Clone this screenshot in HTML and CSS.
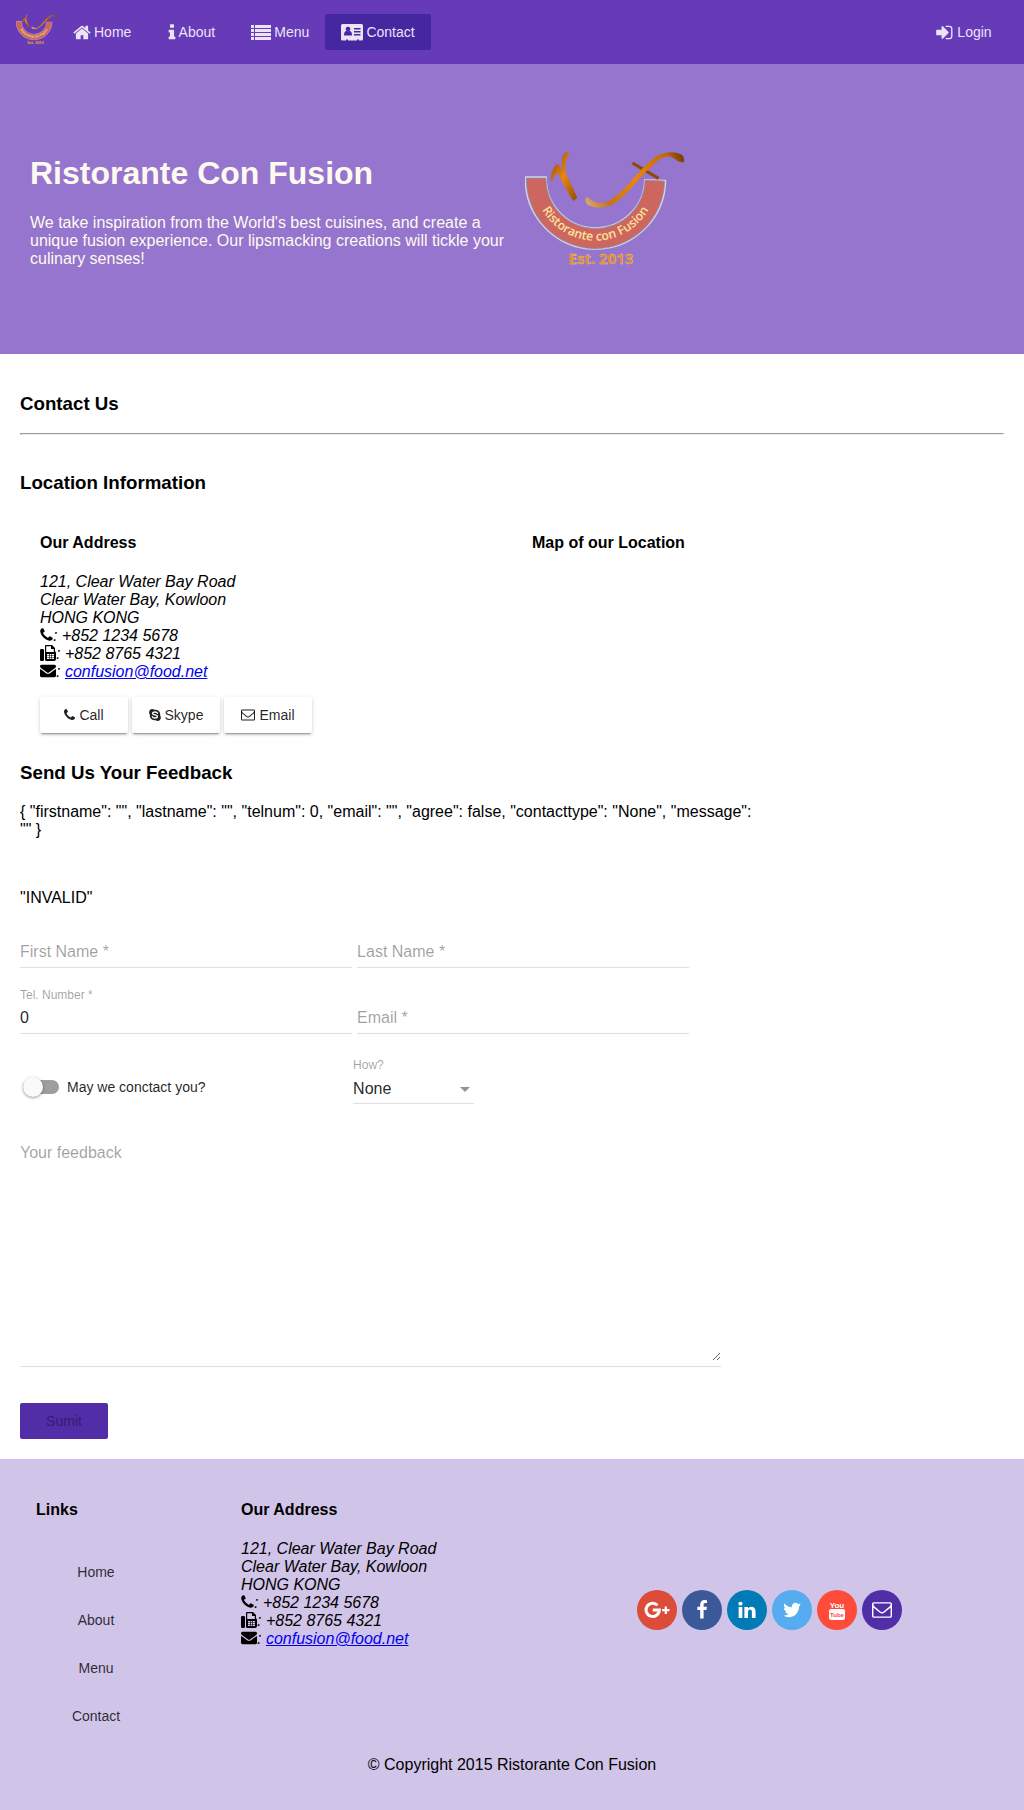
FILE: index.html
```html
<!DOCTYPE html>
<html lang="en">
<head>
<meta charset="utf-8">
<meta name="viewport" content="width=device-width, initial-scale=1">
<title>Ristorante Con Fusion</title>
<link rel="stylesheet" href="styles.css">
</head>
<body>
<svg class="sprite" width="0" height="0" aria-hidden="true">
  <symbol id="i-home" viewBox="64 0 1664 1792"><path d="M1472 992v480q0 26-19 45t-45 19h-384v-384h-256v384h-384q-26 0-45-19t-19-45v-480q0-1 .5-3t.5-3l575-474 575 474q1 2 1 6zm223-69l-62 74q-8 9-21 11h-3q-13 0-21-7l-692-577-692 577q-12 8-24 7-13-2-21-11l-62-74q-8-10-7-23.500t11-21.500l719-599q32-26 76-26t76 26l244 204v-195q0-14 9-23t23-9h192q14 0 23 9t9 23v408l219 182q10 8 11 21.500t-7 23.500z"/></symbol>
  <symbol id="i-info" viewBox="544 0 700 1792"><path d="M1216 1344v128q0 26-19 45t-45 19h-512q-26 0-45-19t-19-45v-128q0-26 19-45t45-19h64v-384h-64q-26 0-45-19t-19-45v-128q0-26 19-45t45-19h384q26 0 45 19t19 45v576h64q26 0 45 19t19 45zm-128-1152v192q0 26-19 45t-45 19h-256q-26 0-45-19t-19-45v-192q0-26 19-45t45-19h256q26 0 45 19t19 45z"/></symbol>
  <symbol id="i-list" viewBox="0 0 20 18"><path d="M0 2h3v3H0zM4 2h16v3H4zM0 6h3v3H0zM4 6h16v3H4zM0 10h3v3H0zM4 10h16v3H4zM0 14h3v3H0zM4 14h16v3H4z"/></symbol>
  <symbol id="i-card" viewBox="0 0 22 18"><path fill-rule="evenodd" d="M2 1h18.500Q22 1 22 2.500v13.500Q22 17.500 20.500 17.500H18v-1h-2v1H7v-1H5v1H1.500Q0 17.500 0 16V2.500Q0 1 1.500 1zM3 12.500h8q0-4-2-4.500h-4q-2 .5-2 4.500zM7 3.700a2.300 2.300 0 1 0 .01 0zM13 5v1.500h6.500V5zM13 8v1.500h6.500V8zM13 11v1.500h6.500V11z"/></symbol>
  <symbol id="i-login" viewBox="128 0 1664 1792"><path d="M1312 896q0 26-19 45l-544 544q-19 19-45 19t-45-19-19-45v-288h-448q-26 0-45-19t-19-45v-384q0-26 19-45t45-19h448v-288q0-26 19-45t45-19 45 19l544 544q19 19 19 45zm352-352v704q0 119-84.500 203.500t-203.500 84.500h-320q-13 0-22.500-9.500t-9.500-22.500q0-4-1-20t-.5-26.500 3-23.500 10-19.500 20.500-6.500h320q66 0 113-47t47-113v-704q0-66-47-113t-113-47h-312l-11.500-1-11.500-3-8-5.500-7-9-2-13.500q0-4-1-20t-.5-26.500 3-23.500 10-19.500 20.500-6.500h320q119 0 203.500 84.500t84.500 203.500z"/></symbol>
  <symbol id="i-phone" viewBox="192 0 1408 1792"><path d="M1600 1240q0 27-10 70.500t-21 68.500q-21 50-122 106-94 51-186 51-27 0-53-3.500t-57.500-12.500-47-14.500-55.500-20.500-49-18q-98-35-175-83-127-79-264-216t-216-264q-48-77-83-175-3-9-18-49t-20.500-55.500-14.500-47-12.500-57.500-3.500-53q0-92 51-186 56-101 106-122 25-11 68.500-21t70.500-10q14 0 21 3 18 6 53 76 11 19 30 54t35 63.500 31 53.500q3 4 17.500 25t21.500 35.500 7 28.500q0 20-28.500 50t-62 55-62 53-28.500 46q0 9 5 22.500t8.500 20.500 14 24 11.500 19q76 137 174 235t235 174q2 1 19 11.500t24 14 20.500 8.500 22.500 5q18 0 46-28.500t53-62 55-62 50-28.500q14 0 28.500 7t35.500 21.500 25 17.500q25 15 53.500 31t63.500 35 54 30q70 35 76 53 3 7 3 21z"/></symbol>
  <symbol id="i-fax" viewBox="0 0 16 16"><path fill-rule="evenodd" d="M1.200 4H2.800Q4 4 4 5.200V14.800Q4 16 2.800 16H1.200Q0 16 0 14.800V5.200Q0 4 1.200 4zM6 0H12L15 3V6.300Q16 6.800 16 8V14Q16 16 14 16H6.500Q5 16 5 14.500V1Q5 0 6 0zM6.200 1.200V7H13.800V4H11V1.200zM7 9V14H14V9z"/><path d="M7 10.400h7v.6H7zM7 12.200h7v.6H7zM9 9h.6v5H9zM11.300 9h.6v5h-.6z"/></symbol>
  <symbol id="i-mail" viewBox="0 64 1792 1792"><path d="M1792 710v794q0 66-47 113t-113 47h-1472q-66 0-113-47t-47-113v-794q44 49 101 87 362 246 497 345 57 42 92.500 65.500t94.500 48 110 24.500h2q51 0 110-24.500t94.500-48 92.500-65.500q170-123 498-345 57-39 100-87zm0-294q0 79-49 151t-122 123q-376 261-468 325-10 7-42.500 30.500t-54 38-52 32.500-57.500 27-50 9h-2q-23 0-50-9t-57.500-27-52-32.500-54-38-42.500-30.500q-91-64-262-182.500t-205-142.500q-62-42-117-115.500t-55-136.500q0-78 41.500-130t118.500-52h1472q65 0 112.500 47t47.500 113z"/></symbol>
  <symbol id="i-mail-o" viewBox="0 64 1792 1792"><path d="M1664 1504v-768q-32 36-69 66-268 206-426 338-51 43-83 67t-86.500 48.500-102.500 24.500h-2q-48 0-102.500-24.500t-86.500-48.500-83-67q-158-132-426-338-37-30-69-66v768q0 13 9.500 22.500t22.500 9.500h1472q13 0 22.500-9.500t9.500-22.500zm0-1051v-24.500l-.5-13-3-12.500-5.500-9-9-7.500-14-2.500h-1472q-13 0-22.500 9.500t-9.500 22.500q0 168 147 284 193 152 401 317 6 5 35 29.500t46 37.500 44.500 31.500 50.500 27.500 43 9h2q20 0 43-9t50.500-27.500 44.500-31.500 46-37.500 35-29.500q208-165 401-317 54-43 100.500-115.500t46.500-131.500zm128-37v1088q0 66-47 113t-113 47h-1472q-66 0-113-47t-47-113v-1088q0-66 47-113t113-47h1472q66 0 113 47t47 113z"/></symbol>
  <symbol id="i-skype" viewBox="0 0 12 14"><path d="M3.300 1Q4.600 1 5.300 1.700Q8 1.300 9.800 3.100T11.200 7.500Q12 8.700 11.800 10Q11.300 13 8.700 13Q7.500 13 6.700 12.300Q4 12.700 2.200 10.900T.8 6.500Q0 5.500 .1 4.300Q.5 1 3.300 1z"/><path d="M8.500 5.300Q8.200 4 6 4Q3.600 4 3.600 5.400Q3.600 6.600 6 6.900T8.500 8.600Q8.500 10 6 10Q3.700 10 3.400 8.600" fill="none" stroke="#fff" stroke-width="1.300" stroke-linecap="round"/></symbol>
  <symbol id="i-gplus" viewBox="0 0 26 18"><path d="M13.500 4.300A6.600 6.600 0 1 0 15.300 9.100H8.800" fill="none" stroke="currentColor" stroke-width="3"/><path d="M20.700 5.500h2.200V8h2.600v2.300h-2.600v2.600h-2.200v-2.600h-2.600V8h2.600z"/></symbol>
  <symbol id="i-facebook" viewBox="0 0 1792 1792"><path d="M1343 12v264h-157q-86 0-116 36t-30 108v189h293l-39 296h-254v759h-306v-759h-255v-296h255v-218q0-186 104-288.500t277-102.500q147 0 228 12z"/></symbol>
  <symbol id="i-linkedin" viewBox="0 0 1792 1792"><path d="M477 625v991h-330v-991h330zm21-306q1 73-50.500 122t-135.500 49h-2q-82 0-132-49t-50-122q0-74 51.500-122.500t134.500-48.500 133 48.500 51 122.500zm1166 729v568h-329v-530q0-105-40.500-164.500t-126.500-59.500q-63 0-105.500 34.500t-63.500 85.500q-11 30-11 81v553h-329q2-399 2-647t-1-296l-1-48h329v144h-2q20-32 41-56t56.500-52 87-43.500 114.500-15.500q171 0 275 113.500t104 332.500z"/></symbol>
  <symbol id="i-twitter" viewBox="0 0 1792 1792"><path d="M1684 408q-67 98-162 167 1 14 1 42 0 130-38 259.500t-115.500 248.500-184.500 210.500-258 146-323 54.500q-271 0-496-145 35 4 78 4 225 0 401-138-105-2-188-64.500t-114-159.500q33 5 61 5 43 0 85-11-112-23-185.500-111.500t-73.500-205.500v-4q68 38 146 41-66-44-105-115t-39-154q0-88 44-163 121 149 294.500 238.500t371.500 99.500q-8-38-8-74 0-134 94.500-228.500t228.500-94.500q140 0 236 102 109-21 205-78-37 115-142 178 93-10 186-50z"/></symbol>
</svg>

<header class="toolbar">
  <a class="brand" href="#" aria-label="Ristorante Con Fusion"><svg class="brand-logo" viewBox="45 30 480 366"><use href="#logo-art"/></svg></a>
  <nav class="nav">
    <a class="btn" href="#"><svg width="18" height="19"><use href="#i-home"/></svg>Home</a>
    <a class="btn" href="#"><svg width="8" height="19"><use href="#i-info"/></svg>About</a>
    <a class="btn" href="#"><svg width="20" height="18"><use href="#i-list"/></svg>Menu</a>
    <a class="btn btn-active" href="#" aria-current="page"><svg width="22" height="18"><use href="#i-card"/></svg>Contact</a>
  </nav>
  <a class="btn" href="#"><svg width="18" height="19"><use href="#i-login"/></svg>Login</a>
</header>

<section class="hero">
  <div class="hero-text">
    <h1>Ristorante Con Fusion</h1>
    <p>We take inspiration from the World's best cuisines, and create a unique fusion experience. Our lipsmacking creations will tickle your culinary senses!</p>
  </div>
  <svg class="hero-logo" viewBox="45 30 480 366" role="img" aria-label="Ristorante con Fusion">
    <defs>
      <linearGradient id="pepper" x1="0" y1="0" x2="1" y2="1">
        <stop offset="0" stop-color="#8a4a08"/><stop offset=".5" stop-color="#e8860f"/><stop offset="1" stop-color="#8f4c06"/>
      </linearGradient>
      <linearGradient id="stem" gradientUnits="userSpaceOnUse" x1="225" y1="190" x2="525" y2="50">
        <stop offset="0" stop-color="#d9a878"/><stop offset=".2" stop-color="#c9730f"/><stop offset=".5" stop-color="#e8860f"/><stop offset=".85" stop-color="#c06a0a"/><stop offset="1" stop-color="#6e3804"/>
      </linearGradient>
    </defs>
    <g id="logo-art">
      <path d="M47 112H108A148 148 0 0 0 405 120L466 122A209 209 0 0 1 47 112Z" fill="#cd665f" stroke="#d8d4e4" stroke-width="6" stroke-linejoin="round"/>
      <path d="M49 114H108A148 148 0 0 0 405 120L464 123A207 207 0 0 1 49 114Z" fill="#cd665f" stroke="#6f9cc8" stroke-width="2"/>
      <path id="logo-arc" d="M72 118A184 184 0 0 0 440 118" fill="none"/>
      <text class="logo-name"><textPath href="#logo-arc" startOffset="50%">Ristorante con Fusion</textPath></text>
      <text class="logo-year" x="273" y="373">Est. 2013</text>
      <path d="M159 46Q164 34 177 37Q176 48 171 58Q164 72 167 98Q181 128 202 173L190 183Q166 148 144 99Q131 104 126 125H122Q122 92 139 73L147 75L156 89Q153 65 159 46Z" fill="url(#pepper)"/>
      <path d="M370 65L448 111L443 119L365 73Z" fill="#8b4a0a"/>
      <path d="M226 176Q228 168 239 176Q262 194 290 187Q325 168 360 127Q405 73 440 48Q482 28 515 44Q526 54 521 67Q508 68 493 56Q470 40 440 65Q412 90 378 128Q334 178 304 196Q262 210 234 196Q224 186 226 176Z" fill="url(#stem)"/>
    </g>
  </svg>
</section>

<main class="content">
  <h3 class="page-title">Contact Us</h3>
  <hr>
  <h3 class="location-title">Location Information</h3>
  <div class="location">
    <div>
      <h4>Our Address</h4>
      <address>
        121, Clear Water Bay Road<br>
        Clear Water Bay, Kowloon<br>
        HONG KONG<br>
        <svg width="13" height="16"><use href="#i-phone"/></svg>: +852 1234 5678<br>
        <svg width="16" height="16"><use href="#i-fax"/></svg>: +852 8765 4321<br>
        <svg width="16" height="16"><use href="#i-mail"/></svg>: <a href="mailto:confusion@food.net">confusion@food.net</a>
      </address>
      <div class="actions">
        <a class="btn btn-raised" href="tel:+85212345678"><svg width="11" height="14"><use href="#i-phone"/></svg>Call</a>
        <a class="btn btn-raised" href="#"><svg width="12" height="14"><use href="#i-skype"/></svg>Skype</a>
        <a class="btn btn-raised" href="mailto:confusion@food.net"><svg width="14" height="14"><use href="#i-mail-o"/></svg>Email</a>
      </div>
    </div>
    <div>
      <h4>Map of our Location</h4>
    </div>
  </div>

  <section class="feedback">
    <h3>Send Us Your Feedback</h3>
    <p>{ "firstname": "", "lastname": "", "telnum": 0, "email": "", "agree": false, "contacttype": "None", "message": "" }</p>
    <p class="status">"INVALID"</p>
    <form>
      <div class="fields">
        <div class="field"><label for="firstname">First Name *</label><input id="firstname" type="text"></div>
        <div class="field"><label for="lastname">Last Name *</label><input id="lastname" type="text"></div>
        <div class="field field-floating"><label for="telnum">Tel. Number *</label><input id="telnum" type="tel" value="0"></div>
        <div class="field"><label for="email">Email *</label><input id="email" type="email"></div>
      </div>
      <div class="contact-row">
        <label class="toggle"><input type="checkbox">May we conctact you?</label>
        <div class="field field-floating field-select">
          <label for="how">How?</label>
          <select id="how"><option>None</option><option>Tel</option><option>Email</option></select>
          <svg width="10" height="5" viewBox="0 0 10 5" aria-hidden="true"><path d="M0 0h10L5 5z"/></svg>
        </div>
      </div>
      <div class="message">
        <label for="message">Your feedback</label>
        <textarea id="message"></textarea>
      </div>
      <button class="btn btn-submit" type="submit" disabled>Sumit</button>
    </form>
  </section>
</main>

<footer class="footer">
  <div class="footer-cols">
    <div>
      <h4>Links</h4>
      <ul class="footer-links">
        <li><a class="btn" href="#">Home</a></li>
        <li><a class="btn" href="#">About</a></li>
        <li><a class="btn" href="#">Menu</a></li>
        <li><a class="btn" href="#">Contact</a></li>
      </ul>
    </div>
    <div>
      <h4>Our Address</h4>
      <address>
        121, Clear Water Bay Road<br>
        Clear Water Bay, Kowloon<br>
        HONG KONG<br>
        <svg width="13" height="16"><use href="#i-phone"/></svg>: +852 1234 5678<br>
        <svg width="16" height="16"><use href="#i-fax"/></svg>: +852 8765 4321<br>
        <svg width="16" height="16"><use href="#i-mail"/></svg>: <a href="mailto:confusion@food.net">confusion@food.net</a>
      </address>
    </div>
    <div class="social">
      <a class="google" href="#" aria-label="Google+"><svg width="26" height="18"><use href="#i-gplus"/></svg></a>
      <a class="facebook" href="#" aria-label="Facebook"><svg width="20" height="20"><use href="#i-facebook"/></svg></a>
      <a class="linkedin" href="#" aria-label="LinkedIn"><svg width="20" height="20"><use href="#i-linkedin"/></svg></a>
      <a class="twitter" href="#" aria-label="Twitter"><svg width="20" height="20"><use href="#i-twitter"/></svg></a>
      <a class="youtube" href="#" aria-label="YouTube"><svg width="16" height="20" viewBox="0 0 16 20"><text class="you" x="8" y="8">You</text><rect y="9" width="16" height="11" rx="2"/><text class="tube" x="8" y="17">Tube</text></svg></a>
      <a class="email" href="#" aria-label="Email"><svg width="20" height="20"><use href="#i-mail-o"/></svg></a>
    </div>
  </div>
  <p class="copyright">© Copyright 2015 Ristorante Con Fusion</p>
</footer>
</body>
</html>
```
FILE: styles.css
```css
* { box-sizing: border-box; }

body {
  margin: 0;
  font-family: Arial, "Liberation Sans", sans-serif;
  font-size: 16px;
  line-height: 18px;
  color: #000;
  background: #fff;
}

h1, h3, h4, p, ul, hr { margin: 0; }
h3 { line-height: 22px; }
h4 { margin-bottom: 21px; }
svg { fill: currentColor; }
.sprite { position: absolute; }

.logo-name,
.logo-year {
  font-family: "Open Sans", sans-serif;
  font-weight: 600;
  text-anchor: middle;
}
.logo-name { font-size: 37px; fill: #fce29a; }
.logo-year { font-size: 45px; font-weight: 700; fill: #e08a1e; stroke: #f0c890; stroke-width: 1; }

/* Buttons */
.btn {
  display: inline-flex;
  align-items: center;
  justify-content: center;
  gap: 4px;
  min-width: 88px;
  height: 36px;
  padding: 0 16px;
  border: 0;
  border-radius: 2px;
  font: 14px/36px Arial, "Liberation Sans", sans-serif;
  color: inherit;
  text-decoration: none;
}
.btn-raised {
  color: rgba(0, 0, 0, 0.87);
  background: #fff;
  box-shadow: 0 3px 1px -2px rgba(0, 0, 0, 0.2), 0 2px 2px rgba(0, 0, 0, 0.14), 0 1px 5px rgba(0, 0, 0, 0.12);
}
.btn-submit { background: #512da8; color: rgba(0, 0, 0, 0.38); }

/* Header */
.toolbar {
  display: flex;
  align-items: center;
  height: 64px;
  padding: 0 16px;
  background: #673ab7;
  color: #ebe4f6;
}
.toolbar .btn { gap: 3px; }
.brand { display: flex; padding-bottom: 4px; }
.brand-logo { width: 41px; height: 32px; }
.nav { display: flex; flex: 1; }
.btn-active { background: #4527a0; }

/* Hero */
.hero {
  display: flex;
  align-items: center;
  gap: 13px;
  padding: 86px 30px 82px;
  background: #9575cd;
  color: floralwhite;
}
.hero-text { flex: 0 0 50%; }
.hero h1 { margin-bottom: 22px; font-size: 32px; line-height: 38px; }
.hero-logo { width: 160px; height: 122px; }

/* Contact page */
.content { padding: 39px 20px 20px; }
.page-title { margin-bottom: 18px; }
.location-title { margin: 37px 0 40px; }
.location { display: grid; grid-template-columns: 1fr 1fr; }
.location > div { padding-left: 20px; }
address svg { vertical-align: -2px; }
address a { color: #00e; }
.actions { display: flex; gap: 4px; margin-top: 16px; }

.feedback { width: 75%; margin-top: 29px; }
.feedback h3 { margin-bottom: 19px; }
.status { margin: 50px 0 15px; }

.fields {
  display: grid;
  grid-template-columns: 45% 45%;
  gap: 20px 5px;
}
.field {
  display: grid;
  grid-template-rows: 16px 30px;
}
.field label,
.message label { color: rgba(0, 0, 0, 0.38); }
.field label { grid-area: 2 / 1; padding-top: 5px; }
.field-floating label { grid-area: 1 / 1; padding: 0; font-size: 12px; line-height: 14px; }
.field input,
.field select {
  grid-area: 2 / 1;
  width: 100%;
  padding: 5px 0 6px;
  border: 0;
  border-bottom: 1px solid #e0e0e0;
  border-radius: 0;
  background: transparent;
  font: 16px/18px Arial, "Liberation Sans", sans-serif;
  color: rgba(0, 0, 0, 0.87);
  appearance: none;
}
.field-select { width: 121px; }
.field-select select { padding: 6px 0 5px; }
.field-select svg { grid-area: 2 / 1; place-self: center end; margin-right: 4px; fill: #949494; pointer-events: none; }

.contact-row { display: grid; grid-template-columns: 45% auto; column-gap: 1px; align-items: end; margin-top: 24px; }
.toggle { display: flex; align-items: center; gap: 8px; height: 34px; padding-left: 3px; font-size: 14px; color: rgba(0, 0, 0, 0.87); }
.toggle input {
  display: flex;
  align-items: center;
  width: 36px;
  height: 14px;
  margin: 0;
  border-radius: 8px;
  background: #9e9e9e;
  appearance: none;
}
.toggle input::before {
  content: "";
  width: 20px;
  height: 20px;
  border-radius: 50%;
  background: #fafafa;
  box-shadow: 0 1px 3px rgba(0, 0, 0, 0.4);
}

.message { display: grid; width: 95%; margin: 40px 0 36px; padding-bottom: 5px; border-bottom: 1px solid #e0e0e0; }
.message label { grid-area: 1 / 1; }
.message textarea {
  grid-area: 1 / 1;
  width: 100%;
  height: 217px;
  padding: 0;
  border: 0;
  background: transparent;
  font: 16px/18px Arial, "Liberation Sans", sans-serif;
  resize: vertical;
}

/* Footer */
.footer { padding: 42px 0 36px; background: #d1c4e9; }
.footer-cols { display: grid; grid-template-columns: 205px 7fr 13fr; padding-left: 36px; }
.footer-links { padding: 8px 0 0 16px; list-style: none; }
.footer-links li { display: flex; padding: 6px 0; color: rgba(0, 0, 0, 0.8); }
.social { display: flex; justify-content: center; gap: 5px; margin-top: 89px; }
.social a {
  display: flex;
  align-items: center;
  justify-content: center;
  width: 40px;
  height: 40px;
  border-radius: 50%;
  color: #fff;
}
.google { background: #dd4b39; }
.facebook { background: #3b5998; }
.linkedin { background: #007bb6; }
.twitter { background: #55acee; }
.youtube { background: #ff4b39; }
.email { background: #512da8; }
.you, .tube { font-family: Arial, "Liberation Sans", sans-serif; font-weight: 700; text-anchor: middle; }
.you { font-size: 8px; }
.tube { font-size: 6px; fill: #ff4b39; }
.copyright { margin-top: 16px; text-align: center; }
```
